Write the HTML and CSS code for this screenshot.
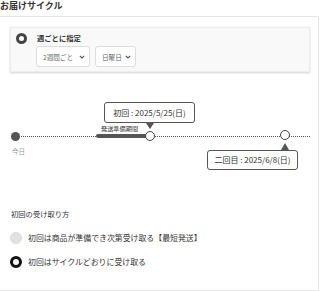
FILE: index.html
```html
<!DOCTYPE html>
<html lang="ja">
<head>
  <meta charset="UTF-8" />
  <meta name="viewport" content="width=device-width, initial-scale=1" />
  <title>お届けサイクル</title>
  <link rel="stylesheet" href="styles.css">
</head>
<body>
  <h2 class="cycle-title">お届けサイクル</h2>

  <div class="panel">
    <!-- 週ごとの指定 -->
    <div class="option-card">
      <span class="radio radio-on"></span>
      <div class="option-body">
        <div class="option-label">週ごとに指定</div>
        <div class="select-row">
          <div class="select sel-week"><span>2週間ごと</span><svg class="chev" width="6" height="4" viewBox="0 0 6 4"><path d="M0.8 0.8 L3 3 L5.2 0.8" fill="none" stroke="#555" stroke-width="1.1"/></svg></div>
          <div class="select sel-day"><span>日曜日</span><svg class="chev" width="6" height="4" viewBox="0 0 6 4"><path d="M0.8 0.8 L3 3 L5.2 0.8" fill="none" stroke="#555" stroke-width="1.1"/></svg></div>
        </div>
      </div>
    </div>

    <!-- タイムライン -->
    <div class="timeline">
      <div class="track"></div>
      <div class="prep-bar"></div>
      <span class="prep-label">発送準備期間</span>
      <span class="dot dot-today"></span>
      <span class="today-label">今日</span>
      <span class="dot dot-open first"></span>
      <span class="dot dot-open second"></span>
      <div class="tip tip-down first">初回 : 2025/5/25(日)</div>
      <div class="tip tip-up second">二回目 : 2025/6/8(日)</div>
    </div>

    <div class="receive">
      <div class="receive-title">初回の受け取り方</div>
      <label class="choice"><span class="radio radio-off"></span>初回は商品が準備でき次第受け取る【最短発送】</label>
      <label class="choice"><span class="radio radio-black"></span>初回はサイクルどおりに受け取る</label>
    </div>
  </div>
</body>
</html>
```

FILE: styles.css
```css
body {
  margin: 0;
  background-color: #fff;
  color: #333;
  font-family: "Noto Sans CJK JP", "Noto Sans", sans-serif;
}
.cycle-title {
  margin: 0 0 4px;
  font-size: 9px;
  line-height: 12px;
  font-weight: bold;
  color: #333;
}
.panel {
  width: 319px;
  box-sizing: border-box;
  border: 1px solid #e6e6e6;
  border-left: 0;
  padding: 10px 8px 22px 10px;
}
.option-card {
  display: flex;
  gap: 10px;
  height: 45px;
  box-sizing: border-box;
  padding: 5px 6px 4px 5px;
  background-color: #f9f9f9;
  border: 1px solid #ededed;
  box-shadow: 0 1px 2px rgba(0, 0, 0, 0.18);
}
.radio {
  display: inline-block;
  width: 11px;
  height: 11px;
  box-sizing: border-box;
  border-radius: 50%;
  flex-shrink: 0;
  background-color: #fff;
}
.radio-on {
  border: 3px solid #444;
}
.option-label {
  font-size: 7.3px;
  line-height: 11px;
  font-weight: bold;
  color: #333;
  margin-bottom: 2px;
}
.select-row {
  display: flex;
  gap: 5px;
  margin-left: -1px;
}
.select {
  height: 21px;
  box-sizing: border-box;
  display: flex;
  align-items: center;
  justify-content: space-between;
  padding: 0 4px 0 6px;
  background-color: #fff;
  border: 1px solid #ddd;
  border-radius: 3px;
  font-size: 6.6px;
  color: #666;
  white-space: nowrap;
}
.sel-week {
  width: 54px;
}
.sel-day {
  width: 41px;
}
.timeline {
  position: relative;
  height: 110px;
}
.track {
  position: absolute;
  left: 5px;
  right: 0;
  top: 64px;
  border-top: 1px dotted #555;
}
.prep-bar {
  position: absolute;
  left: 86px;
  top: 62px;
  width: 54px;
  height: 4px;
  background-color: #555;
  border-radius: 2px 0 0 2px;
}
.prep-label {
  position: absolute;
  left: 91px;
  top: 53px;
  font-size: 6.2px;
  line-height: 8px;
  color: #333;
}
.dot {
  position: absolute;
  border-radius: 50%;
  box-sizing: border-box;
}
.dot-today {
  left: 1px;
  top: 60px;
  width: 9px;
  height: 9px;
  background-color: #555;
}
.today-label {
  position: absolute;
  left: 2px;
  top: 75px;
  font-size: 6.5px;
  line-height: 8px;
  color: #999;
}
.dot-open {
  width: 10px;
  height: 10px;
  background-color: #fff;
  border: 1.6px solid #444;
}
.dot-open.first {
  left: 135px;
  top: 59px;
}
.dot-open.second {
  left: 270px;
  top: 58px;
}
.tip {
  position: absolute;
  width: 91px;
  box-sizing: border-box;
  background-color: #fff;
  border: 1px solid #555;
  border-radius: 3px;
  font-size: 8px;
  color: #333;
  text-align: center;
}
.tip::after {
  content: "";
  position: absolute;
  width: 0;
  height: 0;
  border-left: 4px solid transparent;
  border-right: 4px solid transparent;
}
.tip.first {
  left: 94px;
  top: 30px;
  height: 21px;
  line-height: 19px;
}
.tip-down::after {
  left: 41px;
  top: 20px;
  border-top: 6px solid #555;
}
.tip.second {
  left: 197px;
  top: 78px;
  height: 20px;
  line-height: 18px;
}
.tip-up::after {
  left: 73px;
  top: -8px;
  border-bottom: 7px solid #555;
}
.receive {
  margin-top: 27px;
}
.receive-title {
  font-size: 7.3px;
  line-height: 10px;
  color: #333;
  padding-left: 1px;
  margin-bottom: 12px;
}
.choice {
  display: flex;
  align-items: center;
  gap: 6px;
  height: 13px;
  font-size: 7.9px;
  color: #333;
  margin-bottom: 11px;
}
.choice:last-child {
  margin-bottom: 0;
}
.radio-off {
  width: 12px;
  height: 12px;
  background-color: #e2e2e2;
  border: 1px solid #dcdcdc;
}
.radio-black {
  width: 12px;
  height: 12px;
  border: 3.5px solid #111;
}
```
